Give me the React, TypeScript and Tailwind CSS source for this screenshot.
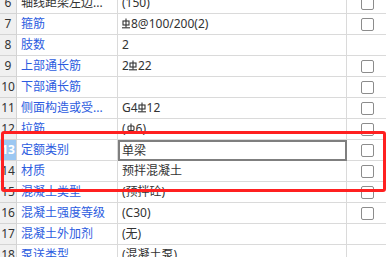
import React from "react";

const Rebar3 = () => (
  <svg width="8" height="11" viewBox="0 0 8 11" className="inline-block mr-[1px] -mt-[2px]" fill="none" stroke="#333" strokeWidth="1.1">
    <line x1="4" y1="0.5" x2="4" y2="9.5" />
    <rect x="1" y="3" width="6" height="4" />
    <line x1="0" y1="9.8" x2="8" y2="9.8" />
  </svg>
);

const Rebar1 = () => (
  <svg width="8" height="11" viewBox="0 0 8 11" className="inline-block mx-[1px] -mt-[2px]" fill="none" stroke="#333" strokeWidth="1.1">
    <line x1="4" y1="0.5" x2="4" y2="10.5" />
    <rect x="1" y="3" width="6" height="4.5" rx="1" />
  </svg>
);

type Row = {
  n: number;
  name: string;
  blue: boolean;
  value: React.ReactNode;
  check: boolean;
};

const rows: Row[] = [
  { n: 6, name: "轴线距梁左边...", blue: false, value: "(150)", check: true },
  { n: 7, name: "箍筋", blue: true, value: (<><Rebar3 />8@100/200(2)</>), check: true },
  { n: 8, name: "肢数", blue: true, value: "2", check: false },
  { n: 9, name: "上部通长筋", blue: true, value: (<>2<Rebar3 />22</>), check: true },
  { n: 10, name: "下部通长筋", blue: true, value: "", check: true },
  { n: 11, name: "侧面构造或受...", blue: true, value: (<>G4<Rebar3 />12</>), check: true },
  { n: 12, name: "拉筋", blue: true, value: (<>(<Rebar1 />6)</>), check: true },
  { n: 13, name: "定额类别", blue: true, value: "单梁", check: true },
  { n: 14, name: "材质", blue: true, value: "预拌混凝土", check: true },
  { n: 15, name: "混凝土类型", blue: true, value: "(预拌砼)", check: true },
  { n: 16, name: "混凝土强度等级", blue: true, value: "(C30)", check: true },
  { n: 17, name: "混凝土外加剂", blue: true, value: "(无)", check: false },
  { n: 18, name: "泵送类型", blue: true, value: "(混凝土泵)", check: false },
];

export default function App() {
  return (
    <div
      className="relative w-[386px] h-[257px] overflow-hidden bg-white text-[12px] text-[#333]"
      style={{ fontFamily: "'Noto Sans','Noto Sans CJK SC',sans-serif" }}
    >
      <div className="flex flex-col -mt-[7px] w-[387px]">
        {rows.map((r) => {
          const sel = r.n === 13;
          return (
            <div key={r.n} className="grid grid-cols-[17px_101px_229px_40px] h-[21px]">
              <div
                className={
                  "flex items-center justify-center border-r border-b border-[#d4d4d4] leading-none " +
                  (sel ? "bg-[#9cc8f2] text-white font-bold" : "bg-[#f0f0f0] text-[#333]")
                }
              >
                {r.n}
              </div>
              <div
                className={
                  "flex items-center pl-[4px] border-r border-b border-[#dadada] whitespace-nowrap overflow-hidden " +
                  (r.blue ? "text-[#2c5ce0]" : "text-[#333]")
                }
              >
                {r.name}
              </div>
              {sel ? (
                <div className="flex items-center pl-[2px] border-2 border-[#7f7f7f] whitespace-nowrap overflow-hidden">
                  {r.value}
                </div>
              ) : (
                <div className="flex items-center pl-[4px] border-r border-b border-[#dadada] whitespace-nowrap overflow-hidden">
                  {r.value}
                </div>
              )}
              <div className="flex items-center justify-center border-b border-[#dadada]">
                {r.check && (
                  <div className="w-[13px] h-[13px] border border-[#8c8c8c] rounded-[2px] bg-white" />
                )}
              </div>
            </div>
          );
        })}
      </div>
      <div className="absolute left-[1px] top-[131px] w-[385px] h-[61px] border-[3px] border-[#ff2020] rounded-[3px] pointer-events-none" />
    </div>
  );
}
